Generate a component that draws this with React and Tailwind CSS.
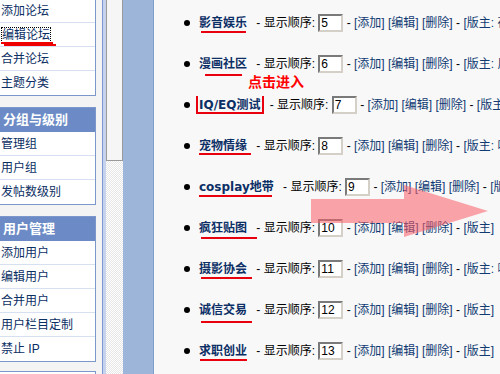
import React from 'react';

const forums = [
  { name: '影音娱乐', order: 5, mod: '[版主: 荷塘月色]', line: 'left-[47px] top-[29px] w-[45px]' },
  { name: '漫画社区', order: 6, mod: '[版主: 居然之家]', line: 'left-[51px] top-[31px] w-[37px]', hint: true },
  { name: 'IQ/EQ测试', order: 7, mod: '[版主: 智者]', box: true },
  { name: '宠物情缘', order: 8, mod: '[版主: 呻吟]', line: 'left-[45px] top-[28px] w-[52px]' },
  { name: 'cosplay地带', order: 9, mod: '[版主]', line: 'left-[45px] top-[29px] w-[73px]' },
  { name: '疯狂贴图', order: 10, mod: '[版主]', line: 'left-[47px] top-[30px] w-[56px]' },
  { name: '摄影协会', order: 11, mod: '[版主: 嗬嗬]', line: 'left-[47px] top-[29px] w-[51px]' },
  { name: '诚信交易', order: 12, mod: '[版主]', line: 'left-[47px] top-[32px] w-[51px]' },
  { name: '求职创业', order: 13, mod: '[版主]', line: 'left-[46px] top-[29px] w-[47px]' },
];

const Item = ({ first, children }) => (
  <div className={`relative flex items-center pl-[6px] text-[#0b2e63] ${first ? 'h-[23px]' : 'h-[24px] border-t border-[#d6e0f1]'}`}>
    {children}
  </div>
);

const Panel = ({ title, items, className = '' }) => (
  <div className={`-ml-[6px] w-[102px] border border-[#7b97cc] bg-white pb-px ${className}`}>
    {title && (
      <div className="flex items-center h-[24px] pl-[8px] bg-[#6c8bc6] text-white text-[13px] font-bold">{title}</div>
    )}
    {items.map((it, i) => (
      <Item key={i} first={i === 0}>{it}</Item>
    ))}
  </div>
);

const Sidebar = () => (
  <aside className="w-[102px] shrink-0 bg-[#f4f4f4] overflow-hidden">
    <Panel
      className="-mt-[2px]"
      items={[
        '添加论坛',
        <>
          <span className="border border-dotted border-black leading-[14px]">编辑论坛</span>
          <span className="absolute left-[6px] top-[19px] w-[52px] h-[1.5px] bg-[#ee0000]" />
          <span className="absolute left-[9px] top-[21px] w-[52px] h-[1.5px] bg-[#ee0000]" />
        </>,
        '合并论坛',
        '主题分类',
      ]}
    />
    <Panel className="mt-[11px]" title="分组与级别" items={['管理组', '用户组', '发帖数级别']} />
    <Panel className="mt-[11px]" title="用户管理" items={['添加用户', '编辑用户', '合并用户', '用户栏目定制', '禁止 IP']} />
    <div className="-ml-[6px] mt-[9px] w-[102px] h-[20px] border border-[#7b97cc] bg-white" />
  </aside>
);

const OrderBox = ({ value }) => (
  <div className="flex shrink-0 items-center w-[25px] h-[18px] border-2 border-t-[#7a7a7a] border-l-[#7a7a7a] border-b-[#d4d0c8] border-r-[#d4d0c8] bg-white pl-px text-black leading-none">
    {value}
  </div>
);

const Row = ({ f }) => (
  <div className="relative flex items-center w-max h-[41px] whitespace-pre">
    <span className="ml-[30px] w-[6px] h-[6px] rounded-full bg-black shrink-0" />
    <span className="ml-[9px] shrink-0 font-bold text-[#0c2f66] [font-family:'DejaVu_Sans','Noto_Sans_CJK_SC',sans-serif]">{f.name}</span>
    <span className="ml-[6px] shrink-0 text-black"> - 显示顺序: </span>
    <OrderBox value={f.order} />
    <span className="shrink-0 text-black"> - </span>
    <span className="shrink-0 text-[#103a72]">[添加] [编辑] [删除]</span>
    <span className="shrink-0 text-black"> - </span>
    <span className="shrink-0 text-[#103a72]">{f.mod}</span>
    {f.line && <span className={`absolute h-[2px] bg-[#e8000e] ${f.line}`} />}
    {f.box && (
      <span className="absolute left-[42px] top-[12px] w-[68px] h-[18px] border-l-2 border-r-2 border-b-2 border-[#e8000e]" />
    )}
    {f.hint && (
      <span className="absolute left-[94px] top-[32px] text-[14px] leading-[14px] font-bold text-[#ff0000]">点击进入</span>
    )}
  </div>
);

export default function App() {
  return (
    <div className="relative flex w-[500px] h-[374px] overflow-hidden bg-[#f8f8f8] text-[12px] [font-family:'Liberation_Sans','Noto_Sans_CJK_SC',sans-serif]">
      <Sidebar />
      <div className="w-px shrink-0 bg-[#7d98ce]" />
      <div className="w-[3px] shrink-0 bg-[#c5d3ec]" />
      <div className="w-[17px] shrink-0 flex flex-col">
        <div className="h-[161px] border-l border-r border-b border-[#9a9a9a] bg-[#f6f6f6]" />
        <div className="flex-1 bg-[repeating-conic-gradient(#ffffff_0_25%,#e6e6e6_0_50%)] bg-[length:2px_2px]" />
      </div>
      <div className="w-[30px] shrink-0 bg-[#9db5d9]" />
      <div className="w-px shrink-0 bg-[#809bcd]" />
      <main className="relative flex-1 min-w-0 overflow-hidden pt-[2px]">
        {forums.map((f) => (
          <Row key={f.name} f={f} />
        ))}
      </main>
      <svg className="absolute left-0 top-0 w-[500px] h-[374px] pointer-events-none" viewBox="0 0 500 374">
        <polygon
          points="311,199 404,199 404,185 488,211 404,237 404,223 311,223"
          fill="rgba(250,93,104,0.55)"
        />
      </svg>
    </div>
  );
}
